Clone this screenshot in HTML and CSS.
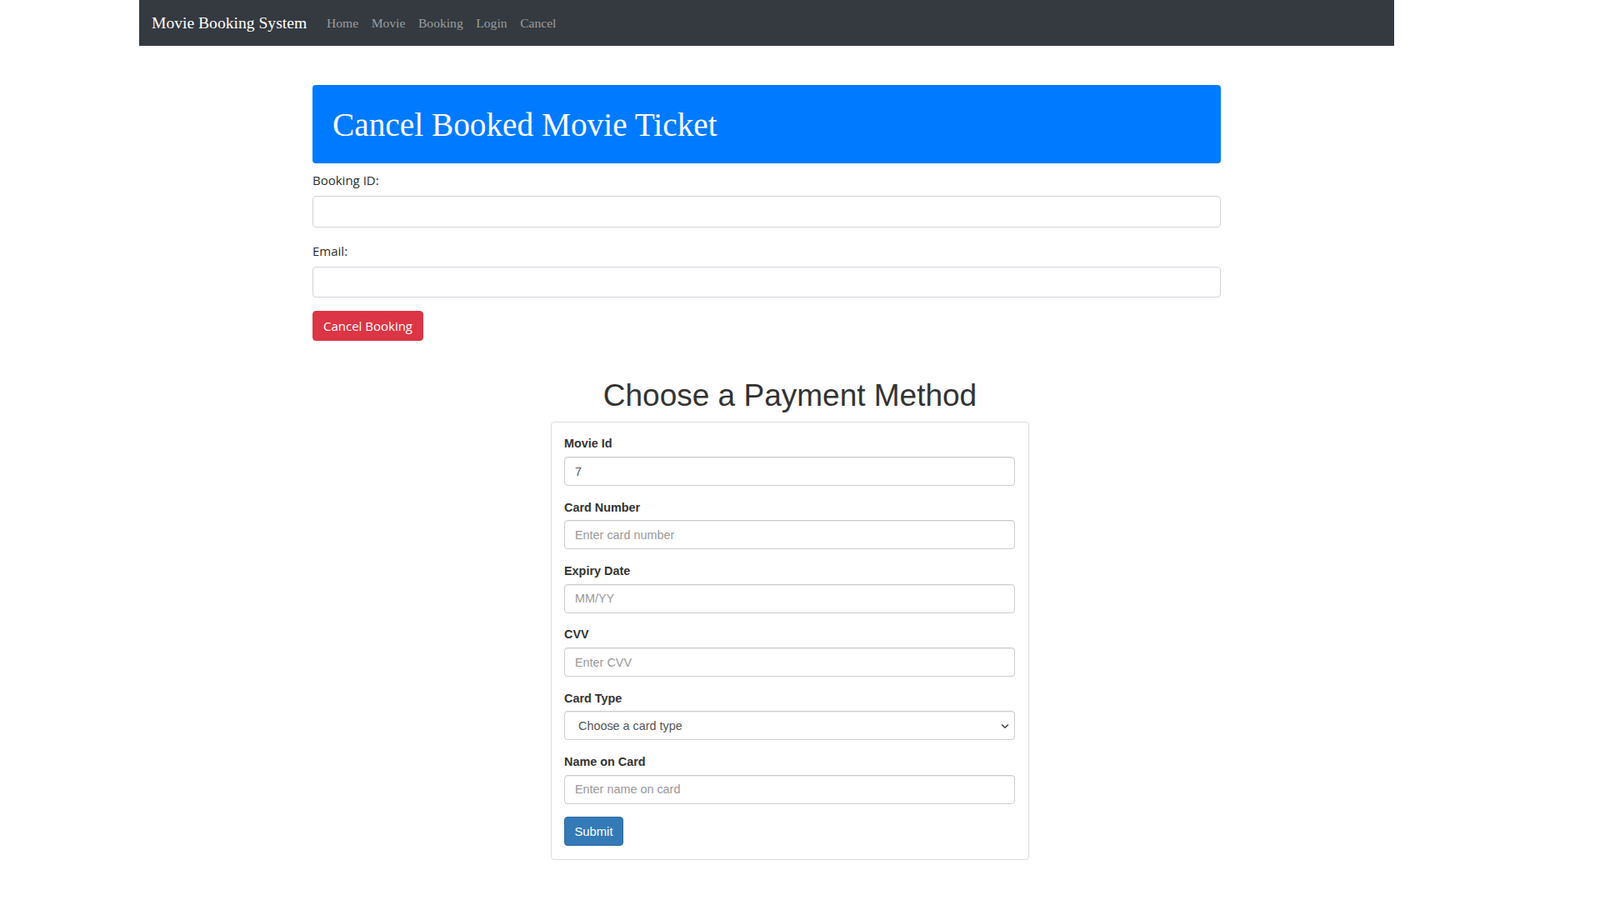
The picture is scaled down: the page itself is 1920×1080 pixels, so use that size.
FILE: index.html
```html
<!DOCTYPE html>
<html lang="en">
<head>
<meta charset="utf-8">
<title>Cancel Booking</title>
<link rel="stylesheet" href="styles.css">
</head>
<body>
<nav class="navbar">
  <a class="brand" href="#">Movie Booking System</a>
  <ul class="nav-links">
    <li><a href="#">Home</a></li>
    <li><a href="#">Movie</a></li>
    <li><a href="#">Booking</a></li>
    <li><a href="#">Login</a></li>
    <li><a href="#">Cancel</a></li>
  </ul>
</nav>

<section class="cancel-wrap">
  <div class="banner"><h1>Cancel Booked Movie Ticket</h1></div>
  <form class="cancel-form">
    <div class="cf-group">
      <label class="cf-label">Booking ID:</label>
      <input class="cf-input" type="text">
    </div>
    <div class="cf-group">
      <label class="cf-label">Email:</label>
      <input class="cf-input cf-input-short" type="email">
    </div>
    <button type="button" class="btn-danger">Cancel Booking</button>
  </form>
</section>

<section class="payment">
  <h1 class="pay-title">Choose a Payment Method</h1>
  <form class="pay-card">
    <div class="pf-group">
      <label class="pf-label">Movie Id</label>
      <input class="pf-input" type="text" value="7">
    </div>
    <div class="pf-group">
      <label class="pf-label">Card Number</label>
      <input class="pf-input" type="text" placeholder="Enter card number">
    </div>
    <div class="pf-group">
      <label class="pf-label">Expiry Date</label>
      <input class="pf-input" type="text" placeholder="MM/YY">
    </div>
    <div class="pf-group">
      <label class="pf-label">CVV</label>
      <input class="pf-input" type="text" placeholder="Enter CVV">
    </div>
    <div class="pf-group">
      <label class="pf-label">Card Type</label>
      <div class="select-wrap">
        <select class="pf-input pf-select">
          <option>Choose a card type</option>
        </select>
        <svg class="chev" width="10" height="7" viewBox="0 0 10 7"><path d="M1.2 1.5 L5 5.2 L8.8 1.5" fill="none" stroke="#444" stroke-width="1.6"/></svg>
      </div>
    </div>
    <div class="pf-group">
      <label class="pf-label">Name on Card</label>
      <input class="pf-input" type="text" placeholder="Enter name on card">
    </div>
    <button type="button" class="btn-submit">Submit</button>
  </form>
</section>
</body>
</html>
```

FILE: styles.css
```css
* { box-sizing: border-box; }

body {
  margin: 0;
  background: #fff;
  font-family: "Liberation Serif", "Times New Roman", serif;
}

/* Navbar */
.navbar {
  margin-left: 167px;
  width: 1506px;
  height: 55px;
  background: #343a40;
  display: flex;
  align-items: center;
  padding: 0 15px;
}
.brand {
  font-family: "Liberation Serif", "Times New Roman", serif;
  font-size: 19.6px;
  line-height: 30px;
  color: #fff;
  text-decoration: none;
  margin-right: 16px;
}
.nav-links {
  list-style: none;
  margin: 0;
  padding: 0;
  display: flex;
}
.nav-links a {
  display: block;
  padding: 0 7.8px;
  font-size: 15.6px;
  line-height: 24px;
  color: #9a9da0;
  text-decoration: none;
}

/* Cancel section */
.cancel-wrap {
  margin-left: 375px;
  width: 1090px;
  margin-top: 47px;
  font-family: "Open Sans", "Noto Sans", sans-serif;
}
.banner {
  height: 94px;
  background: #007bff;
  border-radius: 4px;
  display: flex;
  align-items: center;
  padding: 2px 24px 0;
}
.banner h1 {
  margin: 0;
  font-family: "Liberation Serif", "Times New Roman", serif;
  font-weight: normal;
  font-size: 39.3px;
  line-height: 48px;
  color: #fff;
}
.cancel-form {
  padding-top: 8px;
}
.cf-group {
  margin-bottom: 16px;
}
.cf-label {
  display: block;
  font-size: 15px;
  line-height: 24px;
  color: #292d31;
  margin-bottom: 7px;
}
.cf-input {
  display: block;
  width: 100%;
  height: 38px;
  border: 1px solid #ced4da;
  border-radius: 4px;
  background: #fff;
  font-size: 16px;
  padding: 0 12px;
}
.cf-input-short {
  height: 37px;
}
.btn-danger {
  display: block;
  height: 36px;
  padding: 0;
  width: 133px;
  border: 1px solid #dc3545;
  border-radius: 4px;
  background: #dc3545;
  color: #fff;
  font-family: "Open Sans", "Noto Sans", sans-serif;
  font-size: 15px;
}

/* Payment section */
.payment {
  margin-left: 661px;
  width: 574px;
  margin-top: 46px;
  font-family: "Liberation Sans", Arial, sans-serif;
  color: #333;
}
.pay-title {
  margin: 0 0 10.3px;
  text-align: center;
  font-family: "Liberation Sans", Arial, sans-serif;
  font-weight: normal;
  font-size: 37px;
  line-height: 40.7px;
  color: #333;
}
.pay-card {
  width: 574px;
  border: 1px solid #ddd;
  border-radius: 4px;
  padding: 15.3px 16px 16px 15px;
  box-shadow: 0 1px 1px rgba(0,0,0,.03);
}
.pf-group {
  margin-bottom: 15.6px;
}
.pf-label {
  display: block;
  font-weight: bold;
  font-size: 14.4px;
  line-height: 20.6px;
  margin-bottom: 5.15px;
  color: #333;
}
.pf-input {
  display: block;
  width: 100%;
  height: 35px;
  border: 1px solid #ccc;
  border-radius: 4px;
  background: #fff;
  box-shadow: inset 0 1px 1px rgba(0,0,0,.075);
  padding: 0 12px;
  font-family: "Liberation Sans", Arial, sans-serif;
  font-size: 14.4px;
  color: #555;
}
.pf-input::placeholder {
  color: #999;
}
.select-wrap {
  position: relative;
}
.pf-select {
  appearance: none;
  -webkit-appearance: none;
  padding: 0 12px 0 16px;
  color: #555;
}
.chev {
  position: absolute;
  right: 7px;
  top: 15px;
  pointer-events: none;
}
.btn-submit {
  display: block;
  height: 35px;
  width: 71px;
  padding: 0;
  border: 1px solid #2e6da4;
  border-radius: 4px;
  background: #337ab7;
  color: #fff;
  font-family: "Liberation Sans", Arial, sans-serif;
  font-size: 14.8px;
}
```
